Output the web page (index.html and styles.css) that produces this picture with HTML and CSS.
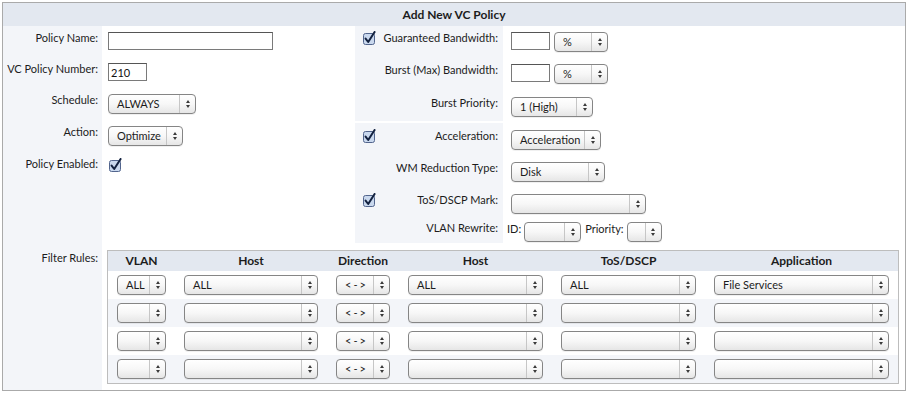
FILE: index.html
```html
<!DOCTYPE html>
<html lang="en">
<head>
  <meta charset="UTF-8" />
  <meta name="viewport" content="width=device-width, initial-scale=1.0" />
  <title>Add New VC Policy</title>
  <link rel="stylesheet" href="styles.css">
</head>

<body>

  <div class="panel">
    <div class="panel-title">Add New VC Policy</div>

    <!-- General settings -->
    <div class="top">
      <div class="label-col">
        <div class="lbl h31">Policy Name:</div>
        <div class="lbl h31">VC Policy Number:</div>
        <div class="lbl h32">Schedule:</div>
        <div class="lbl h32">Action:</div>
        <div class="lbl">Policy Enabled:</div>
      </div>

      <div class="val-col">
        <div class="row h31"><input class="txt w165" type="text"></div>
        <div class="row h31"><input class="txt w39" type="text" value="210"></div>
        <div class="row h32"><span class="sel w88"><span class="sel-text">ALWAYS</span><span class="sel-arrow"></span></span></div>
        <div class="row h32"><span class="sel w75"><span class="sel-text">Optimize</span><span class="sel-arrow"></span></span></div>
        <div class="row">
          <span class="cb"><svg width="13" height="14" viewBox="0 0 13 14"><rect x="0.5" y="2.5" width="11" height="11" rx="2" class="cb-box"/><path d="M2.6 7.6 L5.2 11 L11.6 1" class="cb-tick"/></svg></span>
        </div>
      </div>

      <!-- Bandwidth / acceleration -->
      <div class="right">
        <div class="group group-bw">
          <div class="grow h32">
            <div class="rlabel">
              <span class="cb"><svg width="13" height="14" viewBox="0 0 13 14"><rect x="0.5" y="2.5" width="11" height="11" rx="2" class="cb-box"/><path d="M2.6 7.6 L5.2 11 L11.6 1" class="cb-tick"/></svg></span>
              <span>Guaranteed Bandwidth:</span>
            </div>
            <div class="rval">
              <input class="txt w39" type="text">
              <span class="sel w54"><span class="sel-text">%</span><span class="sel-arrow"></span></span>
            </div>
          </div>
          <div class="grow h33">
            <div class="rlabel"><span>Burst (Max) Bandwidth:</span></div>
            <div class="rval">
              <input class="txt w39" type="text">
              <span class="sel w54"><span class="sel-text">%</span><span class="sel-arrow"></span></span>
            </div>
          </div>
          <div class="grow h24">
            <div class="rlabel"><span>Burst Priority:</span></div>
            <div class="rval">
              <span class="sel w82"><span class="sel-text">1 (High)</span><span class="sel-arrow"></span></span>
            </div>
          </div>
        </div>

        <div class="group group-acc">
          <div class="grow h32">
            <div class="rlabel">
              <span class="cb"><svg width="13" height="14" viewBox="0 0 13 14"><rect x="0.5" y="2.5" width="11" height="11" rx="2" class="cb-box"/><path d="M2.6 7.6 L5.2 11 L11.6 1" class="cb-tick"/></svg></span>
              <span>Acceleration:</span>
            </div>
            <div class="rval">
              <span class="sel w90"><span class="sel-text">Acceleration</span><span class="sel-arrow"></span></span>
            </div>
          </div>
          <div class="grow h32">
            <div class="rlabel"><span>WM Reduction Type:</span></div>
            <div class="rval">
              <span class="sel w94"><span class="sel-text">Disk</span><span class="sel-arrow"></span></span>
            </div>
          </div>
          <div class="grow h28">
            <div class="rlabel">
              <span class="cb"><svg width="13" height="14" viewBox="0 0 13 14"><rect x="0.5" y="2.5" width="11" height="11" rx="2" class="cb-box"/><path d="M2.6 7.6 L5.2 11 L11.6 1" class="cb-tick"/></svg></span>
              <span>ToS/DSCP Mark:</span>
            </div>
            <div class="rval">
              <span class="sel w135"><span class="sel-text"></span><span class="sel-arrow"></span></span>
            </div>
          </div>
          <div class="grow h21">
            <div class="rlabel"><span>VLAN Rewrite:</span></div>
            <div class="rval rval-vlan">
              <span class="inline-lbl">ID:</span>
              <span class="sel w57"><span class="sel-text"></span><span class="sel-arrow"></span></span>
              <span class="inline-lbl">Priority:</span>
              <span class="sel w35"><span class="sel-text"></span><span class="sel-arrow"></span></span>
            </div>
          </div>
        </div>
      </div>
    </div>

    <!-- Filter rules -->
    <div class="filter">
      <div class="label-col filter-label">
        <div class="lbl">Filter Rules:</div>
      </div>
      <div class="filter-body">
        <div class="rules">
          <div class="rules-head">
            <div>VLAN</div>
            <div>Host</div>
            <div>Direction</div>
            <div>Host</div>
            <div>ToS/DSCP</div>
            <div>Application</div>
          </div>
          <div class="rules-row">
            <div><span class="sel"><span class="sel-text">ALL</span><span class="sel-arrow"></span></span></div>
            <div><span class="sel"><span class="sel-text">ALL</span><span class="sel-arrow"></span></span></div>
            <div><span class="sel"><span class="sel-text dir">&lt;-&gt;</span><span class="sel-arrow"></span></span></div>
            <div><span class="sel"><span class="sel-text">ALL</span><span class="sel-arrow"></span></span></div>
            <div><span class="sel"><span class="sel-text">ALL</span><span class="sel-arrow"></span></span></div>
            <div><span class="sel"><span class="sel-text">File Services</span><span class="sel-arrow"></span></span></div>
          </div>
          <div class="rules-row alt">
            <div><span class="sel"><span class="sel-text"></span><span class="sel-arrow"></span></span></div>
            <div><span class="sel"><span class="sel-text"></span><span class="sel-arrow"></span></span></div>
            <div><span class="sel"><span class="sel-text dir">&lt;-&gt;</span><span class="sel-arrow"></span></span></div>
            <div><span class="sel"><span class="sel-text"></span><span class="sel-arrow"></span></span></div>
            <div><span class="sel"><span class="sel-text"></span><span class="sel-arrow"></span></span></div>
            <div><span class="sel"><span class="sel-text"></span><span class="sel-arrow"></span></span></div>
          </div>
          <div class="rules-row">
            <div><span class="sel"><span class="sel-text"></span><span class="sel-arrow"></span></span></div>
            <div><span class="sel"><span class="sel-text"></span><span class="sel-arrow"></span></span></div>
            <div><span class="sel"><span class="sel-text dir">&lt;-&gt;</span><span class="sel-arrow"></span></span></div>
            <div><span class="sel"><span class="sel-text"></span><span class="sel-arrow"></span></span></div>
            <div><span class="sel"><span class="sel-text"></span><span class="sel-arrow"></span></span></div>
            <div><span class="sel"><span class="sel-text"></span><span class="sel-arrow"></span></span></div>
          </div>
          <div class="rules-row alt">
            <div><span class="sel"><span class="sel-text"></span><span class="sel-arrow"></span></span></div>
            <div><span class="sel"><span class="sel-text"></span><span class="sel-arrow"></span></span></div>
            <div><span class="sel"><span class="sel-text dir">&lt;-&gt;</span><span class="sel-arrow"></span></span></div>
            <div><span class="sel"><span class="sel-text"></span><span class="sel-arrow"></span></span></div>
            <div><span class="sel"><span class="sel-text"></span><span class="sel-arrow"></span></span></div>
            <div><span class="sel"><span class="sel-text"></span><span class="sel-arrow"></span></span></div>
          </div>
        </div>
      </div>
    </div>
  </div>

</body>
</html>
```

FILE: styles.css
```css
* { margin: 0; padding: 0; box-sizing: border-box; }
body {
  font-family: Lato, 'Liberation Sans', sans-serif;
  font-size: 11px;
  color: #1c1c1c;
  background-color: #fff;
}

.panel {
  margin: 2px;
  width: 904px;
  border: 1px solid #aaa;
}
.panel-title {
  height: 23px;
  line-height: 23px;
  background-color: #e3e8f0;
  text-align: center;
  font-weight: bold;
  font-size: 12px;
}

/* row heights */
.h21 { height: 21px; }
.h24 { height: 24px; }
.h28 { height: 28px; }
.h31 { height: 31px; }
.h32 { height: 32px; }
.h33 { height: 33px; }

/* --- top block --- */
.top { display: flex; }
.label-col {
  width: 99px;
  background-color: #f3f5f9;
  padding-top: 5px;
}
.lbl {
  text-align: right;
  padding-right: 4px;
  line-height: 14px;
}
.val-col {
  width: 253px;
  padding: 6px 0 0 6px;
}
.row { display: flex; align-items: flex-start; }

.right { flex: 1; }
.group {
  display: flex;
  flex-direction: column;
}
.group-bw { padding-top: 6px; background: linear-gradient(to right, #f3f5f9 148px, #fff 148px); }
.group-acc {
  margin-top: 2px;
  padding-top: 7px;
  background: linear-gradient(to right, #f3f5f9 148px, #fff 148px);
}
.grow {
  display: grid;
  grid-template-columns: 148px 1fr;
}
.rlabel {
  display: flex;
  justify-content: flex-end;
  align-items: flex-start;
  padding: 0 5px 0 8px;
  line-height: 14px;
  margin-top: -1px;
}
.rlabel .cb { margin-right: auto; margin-top: 0; }
.rval {
  display: flex;
  align-items: flex-start;
  gap: 4px;
  padding-left: 8px;
}
.rval-vlan { padding-left: 4px; gap: 3px; }
.inline-lbl { line-height: 14px; margin-top: 0; }
.rval-vlan .sel { margin-right: 1px; }

/* --- controls --- */
.txt {
  height: 18px;
  border: 1px solid #7a7a7a;
  border-top-color: #555;
  background: #fff;
  font-family: inherit;
  font-size: 11px;
  color: #111;
  padding: 0 2px;
  outline: none;
}
.w39 { width: 39px; }
.w165 { width: 165px; }

.sel {
  display: inline-flex;
  height: 20px;
  border: 1px solid #858585;
  border-radius: 4px;
  background: linear-gradient(#fff, #f7f7f7 50%, #e6e6e6);
  box-shadow: 0 1px 0 rgba(0, 0, 0, 0.06);
}
.sel-text {
  flex: 1;
  padding-left: 8px;
  line-height: 18px;
  white-space: nowrap;
  overflow: hidden;
}
.sel-text.dir { letter-spacing: 2px; }
.sel-arrow {
  width: 16px;
  flex: none;
  border-left: 1px solid #c6c6c6;
  display: flex;
  flex-direction: column;
  align-items: center;
  justify-content: center;
  gap: 2px;
}
.sel-arrow::before,
.sel-arrow::after {
  content: "";
  border-left: 2.5px solid transparent;
  border-right: 2.5px solid transparent;
}
.sel-arrow::before { border-bottom: 3px solid #3a3a3a; }
.sel-arrow::after { border-top: 3px solid #3a3a3a; }

.w35 { width: 35px; }
.w54 { width: 54px; }
.w57 { width: 57px; }
.w75 { width: 75px; }
.w82 { width: 82px; }
.w88 { width: 88px; }
.w90 { width: 90px; }
.w94 { width: 94px; }
.w135 { width: 135px; }

.cb { display: inline-flex; width: 13px; height: 14px; }
.cb-box { fill: #c9d8ee; stroke: #52658d; stroke-width: 1; }
.cb-tick { fill: none; stroke: #12213f; stroke-width: 2; stroke-linecap: round; stroke-linejoin: round; }
.val-col .cb { margin: 0 0 0 1px; }

/* --- filter rules --- */
.filter { display: flex; }
.filter-label { padding-top: 8px; }
.filter-body { padding: 7px 0 6px 5px; }
.rules {
  width: 792px;
  border: 1px solid #bdbdbd;
}
.rules-head,
.rules-row {
  display: grid;
  grid-template-columns: 67px 152px 72px 153px 153px 193px;
}
.rules-head {
  height: 20px;
  line-height: 20px;
  background-color: #e3e8f0;
  font-weight: bold;
  font-size: 12px;
  text-align: center;
}
.rules-row {
  height: 28px;
  align-items: center;
}
.rules-row.alt { background-color: #f3f5f9; }
.rules-row > div { padding: 0 9px; }
.rules-row .sel { display: flex; width: 100%; }
```
